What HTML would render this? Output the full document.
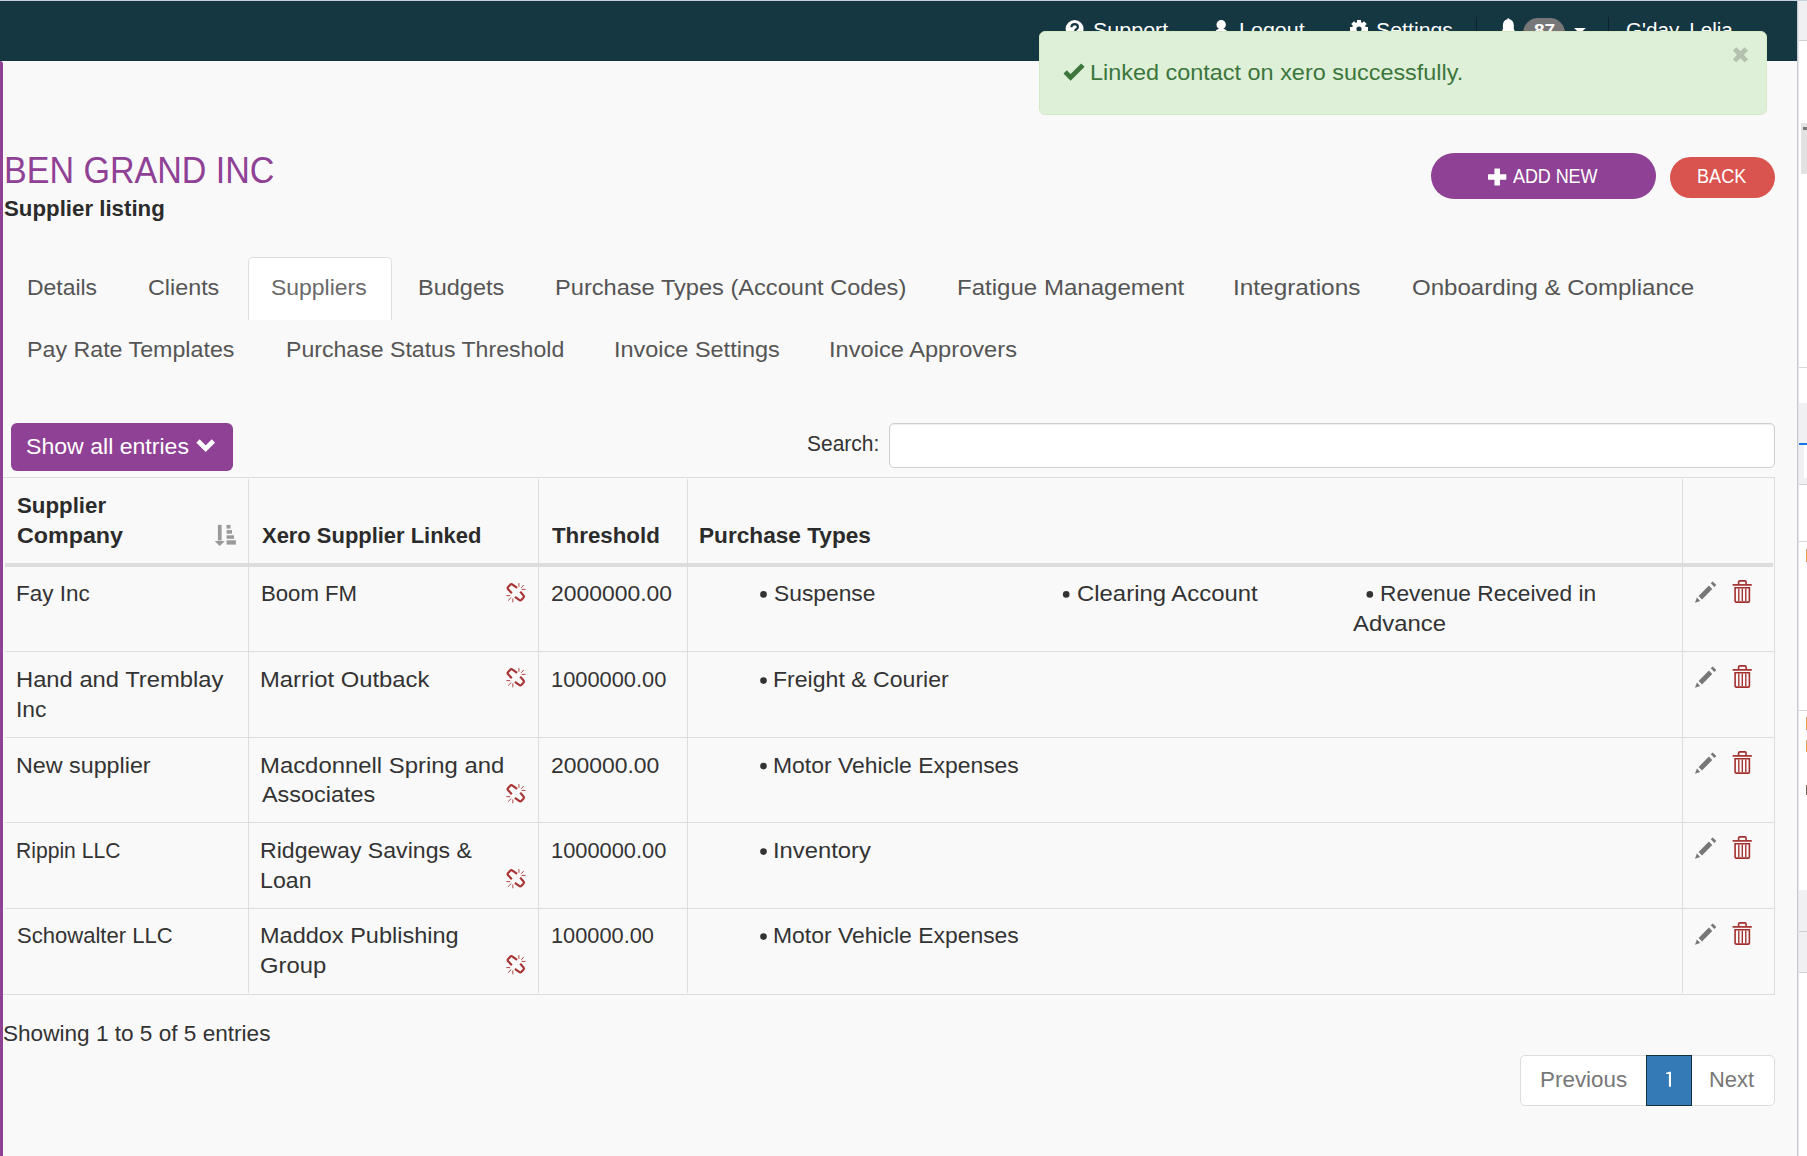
<!DOCTYPE html>
<html><head><meta charset="utf-8">
<style>
html,body{margin:0;padding:0;}
body{width:1807px;height:1156px;overflow:hidden;position:relative;background:#f9f9f9;font-family:"Liberation Sans",sans-serif;}
.tx{position:absolute;white-space:nowrap;transform-origin:0 0;}
.bx{position:absolute;box-sizing:border-box;}
svg{position:absolute;overflow:visible;}
</style></head><body>
<!-- top line + navbar -->
<div class="bx" style="left:0;top:0;width:1807px;height:1px;background:#c9d1df;"></div>
<div class="bx" style="left:0;top:1px;width:1797px;height:60px;background:#153742;"></div>
<!-- right strip -->
<div class="bx" style="left:1797px;top:1px;width:10px;height:1155px;background:#ffffff;border-left:1px solid #c6c9cf;box-shadow:inset 1px 0 0 #e6e7ea;"></div>
<div class="bx" style="left:1799px;top:1px;width:8px;height:40px;background:#f0f0f3;border-bottom:1px solid #d0d0d4;"></div>
<div class="bx" style="left:1801px;top:123px;width:6px;height:51px;background:#e2e2e2;"></div>
<div class="bx" style="left:1803px;top:127px;width:4px;height:3px;background:#777;"></div>
<div class="bx" style="left:1799px;top:367px;width:8px;height:1px;background:#d8d8d8;"></div>
<div class="bx" style="left:1799px;top:403px;width:8px;height:82px;background:#f0f0f3;border-bottom:1px solid #d0d0d4;"></div>
<div class="bx" style="left:1799px;top:443px;width:8px;height:2px;background:#1a73e8;"></div>
<div class="bx" style="left:1804px;top:445px;width:3px;height:33px;background:#ffffff;"></div>
<div class="bx" style="left:1799px;top:541px;width:8px;height:1px;background:#d8d8d8;"></div>
<div class="bx" style="left:1799px;top:710px;width:8px;height:1px;background:#d8d8d8;"></div>
<div class="bx" style="left:1806px;top:549px;width:1px;height:13px;background:#e8a050;"></div>
<div class="bx" style="left:1806px;top:717px;width:1px;height:13px;background:#e8a050;"></div>
<div class="bx" style="left:1806px;top:740px;width:1px;height:12px;background:#e8a050;"></div>
<div class="bx" style="left:1806px;top:785px;width:1px;height:10px;background:#776655;"></div>
<div class="bx" style="left:1799px;top:890px;width:8px;height:83px;background:#f0f0f3;border-bottom:1px solid #d0d0d4;"></div>
<div class="bx" style="left:1799px;top:931px;width:8px;height:1px;background:#d0d0d4;"></div>

<!-- purple left bar -->
<div class="bx" style="left:0;top:61px;width:3px;height:1095px;background:#8f4195;border-top-right-radius:3px;"></div>

<!-- navbar icons -->
<svg style="left:1065px;top:20px" width="20" height="20" viewBox="0 0 20 20">
  <circle cx="9.6" cy="9" r="9" fill="#fff"/>
  <path d="M6.4 7.2 Q6.6 4.2 9.7 4.2 Q12.9 4.3 12.9 6.9 Q12.8 8.6 11 9.5 Q10.3 9.9 10.3 11" stroke="#153742" stroke-width="2.2" fill="none"/>
</svg>
<svg style="left:1213px;top:19px" width="18" height="16" viewBox="0 0 18 16">
  <circle cx="8.2" cy="5.8" r="4.7" fill="#fff"/>
  <path d="M1.3 16 Q2 9.6 8.2 9.6 Q14.4 9.6 15.6 16 Z" fill="#fff"/>
</svg>
<svg style="left:1349px;top:19px" width="20" height="16" viewBox="0 0 20 16">
  <g fill="#fff">
  <circle cx="10" cy="10" r="7"/>
  <rect x="8" y="1" width="4" height="4"/>
  <rect x="8" y="15" width="4" height="4"/>
  <rect x="1" y="8" width="4" height="4"/>
  <rect x="15" y="8" width="4" height="4"/>
  <rect x="8" y="1" width="4" height="4" transform="rotate(45 10 10)"/>
  <rect x="8" y="15" width="4" height="4" transform="rotate(45 10 10)"/>
  <rect x="1" y="8" width="4" height="4" transform="rotate(45 10 10)"/>
  <rect x="15" y="8" width="4" height="4" transform="rotate(45 10 10)"/>
  </g>
  <circle cx="10" cy="10" r="2.6" fill="#153742"/>
</svg>
<div class="bx" style="left:1476px;top:17px;width:1px;height:44px;background:#0c252d;"></div>
<div class="bx" style="left:1608px;top:17px;width:1px;height:44px;background:#0c252d;"></div>
<svg style="left:1501px;top:18px" width="16" height="16" viewBox="0 0 16 16">
  <path d="M7.3 0.3 Q8.2 0.3 8.4 1.3 Q12.6 2.5 12.8 7 L12.8 11 L14.2 14 L0.5 14 L1.9 11 L1.9 7 Q2.1 2.5 6.3 1.3 Q6.5 0.3 7.3 0.3Z" fill="#fff"/>
</svg>
<div class="bx" style="left:1522.7px;top:17.9px;width:42.3px;height:30px;background:#777;border-radius:15px;"></div>
<svg style="left:1574px;top:28px" width="12" height="6" viewBox="0 0 12 6"><path d="M0 0 L11.8 0 L5.9 5.5Z" fill="#fff"/></svg>

<!-- alert -->
<div class="bx" style="left:1039px;top:31px;width:728px;height:84px;background:#dff0d8;border:1px solid #d6e9c6;border-radius:6px;z-index:10;"></div>
<svg style="left:1062px;top:62px;z-index:11" width="24" height="20" viewBox="0 0 24 20">
  <path d="M1.5 11.5 L4.8 8.2 L8.6 12 L19.2 1.5 L22.6 4.8 L8.6 18.8 Z" fill="#3c763d"/>
</svg>
<svg style="left:0;top:0;z-index:11" width="1807" height="100" viewBox="0 0 1807 100">
  <path d="M1736.4 47.3 L1732.9 50.5 L1737 54.7 L1732.9 59.4 L1736.2 62.3 L1740.4 58.2 L1744.5 62.3 L1748.1 59.4 L1743.8 54.7 L1748.1 50.5 L1744.5 47.3 L1740.5 51.2 Z" fill="#b3c1ae"/>
</svg>

<!-- buttons -->
<div class="bx" style="left:1431px;top:153px;width:225px;height:46px;background:#8f4195;border-radius:23px;"></div>
<svg style="left:1488px;top:167.5px" width="19" height="19" viewBox="0 0 19 19">
  <path d="M9.2 0.4 L9.2 17.4 M0 8.9 L18.3 8.9" stroke="#fff" stroke-width="5.5"/>
</svg>
<div class="bx" style="left:1670px;top:157px;width:105px;height:41px;background:#d9534f;border-radius:20.5px;"></div>

<!-- active tab -->
<div class="bx" style="left:248px;top:257px;width:144px;height:63px;background:#fff;border:1px solid #ddd;border-bottom:none;border-radius:5px 5px 0 0;"></div>

<!-- show entries btn -->
<div class="bx" style="left:11px;top:423px;width:222px;height:47.6px;background:#8f4195;border-radius:6px;"></div>
<svg style="left:195px;top:437px" width="22" height="16" viewBox="0 0 22 16">
  <path d="M3 4 L10.7 11.7 L18.4 4" stroke="#fff" stroke-width="4.6" fill="none"/>
</svg>
<!-- search input -->
<div class="bx" style="left:889px;top:423px;width:886px;height:45px;background:#fff;border:1px solid #cfcfcf;border-radius:5px;box-shadow:inset 0 1px 1px rgba(0,0,0,.075);"></div>

<!-- table -->
<div class="bx" style="left:3px;top:477px;width:1772px;height:518px;border:1px solid #dddddd;border-left:none;"></div>
<div class="bx" style="left:5px;top:563px;width:1768px;height:3.6px;background:#dddddd;"></div>
<div class="bx" style="left:5px;top:651px;width:1769px;height:1px;background:#dddddd;"></div>
<div class="bx" style="left:5px;top:737px;width:1769px;height:1px;background:#dddddd;"></div>
<div class="bx" style="left:5px;top:822px;width:1769px;height:1px;background:#dddddd;"></div>
<div class="bx" style="left:5px;top:908px;width:1769px;height:1px;background:#dddddd;"></div>
<div class="bx" style="left:248px;top:479px;width:1px;height:514px;background:#dddddd;"></div>
<div class="bx" style="left:538px;top:479px;width:1px;height:514px;background:#dddddd;"></div>
<div class="bx" style="left:687px;top:479px;width:1px;height:514px;background:#dddddd;"></div>
<div class="bx" style="left:1682px;top:479px;width:1px;height:514px;background:#dddddd;"></div>

<!-- sort icon -->
<svg style="left:210px;top:520px" width="30" height="30" viewBox="0 0 30 30">
  <g fill="#999">
  <rect x="7.9" y="4.9" width="3.7" height="15.6"/>
  <path d="M4.7 20.9 L14.9 20.9 L9.7 26.1Z"/>
  <rect x="16.6" y="4.9" width="3.9" height="3.7"/>
  <rect x="16.6" y="10.1" width="5.4" height="3.6"/>
  <rect x="16.6" y="15.3" width="7.4" height="3.5"/>
  <rect x="16.6" y="20.3" width="9.3" height="4.3"/>
  </g>
</svg>
<svg style="left:495px;top:575px" width="40" height="40" viewBox="0 0 40 40">
  <g stroke="#a83535" fill="none">
  <path d="M22.1 12.9 L17.55 9.7 Q16.2 8.6 15.23 9.71 L13.17 11.89 Q12.1 13.1 13.11 14.16 L16.8 18.2" stroke-width="2.2"/>
  <path d="M19.9 21.9 L24.15 24.81 Q25.3 25.8 26.48 24.8 L28.42 22.8 Q29.5 21.6 28.53 20.51 L25.2 16.6" stroke-width="2.2"/>
  <path d="M23.9 8.1 L23.9 11.8 M26.3 12.8 L28.7 10 M26.6 14.4 L30.5 14.4 M11.4 20.6 L15.2 20.6 M13.1 25.6 L16.3 22.5 M17.8 23.5 L17.8 27.3" stroke-width="0.9"/>
  </g>
</svg>
<svg style="left:1685px;top:570px" width="80" height="45" viewBox="1685 570 80 45">
  <path d="M1695 602.8 L1696.9 597.6 L1700.2 601 Z" fill="#777"/>
  <path d="M1698.6 596 L1708.9 585.6 L1712.3 589 L1702 599.4 Z" fill="#777"/>
  <path d="M1710.7 583.3 L1712.7 581.5 L1716.3 585 L1714.4 587 Z" fill="#777"/>
  <g stroke="#a32e2e" fill="none" stroke-width="1.6">
  <path d="M1738.6 584.2 L1738.6 582 Q1738.6 580.9 1739.8 580.9 L1745 580.9 Q1746.1 580.9 1746.1 582 L1746.1 584.2"/>
  <path d="M1732.6 584.9 L1751.8 584.9" stroke-width="1.7"/>
  <path d="M1735.1 587.8 L1735.1 601 Q1735.1 602.1 1736.3 602.1 L1748.2 602.1 Q1749.4 602.1 1749.4 601 L1749.4 587.8 Z"/>
  <path d="M1738.8 588.5 L1738.8 601 M1742.3 588.5 L1742.3 601 M1745.8 588.5 L1745.8 601" stroke-width="1.35"/>
  </g>
</svg>
<svg style="left:495px;top:660.4px" width="40" height="40" viewBox="0 0 40 40">
  <g stroke="#a83535" fill="none">
  <path d="M22.1 12.9 L17.55 9.7 Q16.2 8.6 15.23 9.71 L13.17 11.89 Q12.1 13.1 13.11 14.16 L16.8 18.2" stroke-width="2.2"/>
  <path d="M19.9 21.9 L24.15 24.81 Q25.3 25.8 26.48 24.8 L28.42 22.8 Q29.5 21.6 28.53 20.51 L25.2 16.6" stroke-width="2.2"/>
  <path d="M23.9 8.1 L23.9 11.8 M26.3 12.8 L28.7 10 M26.6 14.4 L30.5 14.4 M11.4 20.6 L15.2 20.6 M13.1 25.6 L16.3 22.5 M17.8 23.5 L17.8 27.3" stroke-width="0.9"/>
  </g>
</svg>
<svg style="left:1685px;top:655.4px" width="80" height="45" viewBox="1685 570 80 45">
  <path d="M1695 602.8 L1696.9 597.6 L1700.2 601 Z" fill="#777"/>
  <path d="M1698.6 596 L1708.9 585.6 L1712.3 589 L1702 599.4 Z" fill="#777"/>
  <path d="M1710.7 583.3 L1712.7 581.5 L1716.3 585 L1714.4 587 Z" fill="#777"/>
  <g stroke="#a32e2e" fill="none" stroke-width="1.6">
  <path d="M1738.6 584.2 L1738.6 582 Q1738.6 580.9 1739.8 580.9 L1745 580.9 Q1746.1 580.9 1746.1 582 L1746.1 584.2"/>
  <path d="M1732.6 584.9 L1751.8 584.9" stroke-width="1.7"/>
  <path d="M1735.1 587.8 L1735.1 601 Q1735.1 602.1 1736.3 602.1 L1748.2 602.1 Q1749.4 602.1 1749.4 601 L1749.4 587.8 Z"/>
  <path d="M1738.8 588.5 L1738.8 601 M1742.3 588.5 L1742.3 601 M1745.8 588.5 L1745.8 601" stroke-width="1.35"/>
  </g>
</svg>
<svg style="left:495px;top:775.5px" width="40" height="40" viewBox="0 0 40 40">
  <g stroke="#a83535" fill="none">
  <path d="M22.1 12.9 L17.55 9.7 Q16.2 8.6 15.23 9.71 L13.17 11.89 Q12.1 13.1 13.11 14.16 L16.8 18.2" stroke-width="2.2"/>
  <path d="M19.9 21.9 L24.15 24.81 Q25.3 25.8 26.48 24.8 L28.42 22.8 Q29.5 21.6 28.53 20.51 L25.2 16.6" stroke-width="2.2"/>
  <path d="M23.9 8.1 L23.9 11.8 M26.3 12.8 L28.7 10 M26.6 14.4 L30.5 14.4 M11.4 20.6 L15.2 20.6 M13.1 25.6 L16.3 22.5 M17.8 23.5 L17.8 27.3" stroke-width="0.9"/>
  </g>
</svg>
<svg style="left:1685px;top:741px" width="80" height="45" viewBox="1685 570 80 45">
  <path d="M1695 602.8 L1696.9 597.6 L1700.2 601 Z" fill="#777"/>
  <path d="M1698.6 596 L1708.9 585.6 L1712.3 589 L1702 599.4 Z" fill="#777"/>
  <path d="M1710.7 583.3 L1712.7 581.5 L1716.3 585 L1714.4 587 Z" fill="#777"/>
  <g stroke="#a32e2e" fill="none" stroke-width="1.6">
  <path d="M1738.6 584.2 L1738.6 582 Q1738.6 580.9 1739.8 580.9 L1745 580.9 Q1746.1 580.9 1746.1 582 L1746.1 584.2"/>
  <path d="M1732.6 584.9 L1751.8 584.9" stroke-width="1.7"/>
  <path d="M1735.1 587.8 L1735.1 601 Q1735.1 602.1 1736.3 602.1 L1748.2 602.1 Q1749.4 602.1 1749.4 601 L1749.4 587.8 Z"/>
  <path d="M1738.8 588.5 L1738.8 601 M1742.3 588.5 L1742.3 601 M1745.8 588.5 L1745.8 601" stroke-width="1.35"/>
  </g>
</svg>
<svg style="left:495px;top:860.8px" width="40" height="40" viewBox="0 0 40 40">
  <g stroke="#a83535" fill="none">
  <path d="M22.1 12.9 L17.55 9.7 Q16.2 8.6 15.23 9.71 L13.17 11.89 Q12.1 13.1 13.11 14.16 L16.8 18.2" stroke-width="2.2"/>
  <path d="M19.9 21.9 L24.15 24.81 Q25.3 25.8 26.48 24.8 L28.42 22.8 Q29.5 21.6 28.53 20.51 L25.2 16.6" stroke-width="2.2"/>
  <path d="M23.9 8.1 L23.9 11.8 M26.3 12.8 L28.7 10 M26.6 14.4 L30.5 14.4 M11.4 20.6 L15.2 20.6 M13.1 25.6 L16.3 22.5 M17.8 23.5 L17.8 27.3" stroke-width="0.9"/>
  </g>
</svg>
<svg style="left:1685px;top:826.3px" width="80" height="45" viewBox="1685 570 80 45">
  <path d="M1695 602.8 L1696.9 597.6 L1700.2 601 Z" fill="#777"/>
  <path d="M1698.6 596 L1708.9 585.6 L1712.3 589 L1702 599.4 Z" fill="#777"/>
  <path d="M1710.7 583.3 L1712.7 581.5 L1716.3 585 L1714.4 587 Z" fill="#777"/>
  <g stroke="#a32e2e" fill="none" stroke-width="1.6">
  <path d="M1738.6 584.2 L1738.6 582 Q1738.6 580.9 1739.8 580.9 L1745 580.9 Q1746.1 580.9 1746.1 582 L1746.1 584.2"/>
  <path d="M1732.6 584.9 L1751.8 584.9" stroke-width="1.7"/>
  <path d="M1735.1 587.8 L1735.1 601 Q1735.1 602.1 1736.3 602.1 L1748.2 602.1 Q1749.4 602.1 1749.4 601 L1749.4 587.8 Z"/>
  <path d="M1738.8 588.5 L1738.8 601 M1742.3 588.5 L1742.3 601 M1745.8 588.5 L1745.8 601" stroke-width="1.35"/>
  </g>
</svg>
<svg style="left:495px;top:946.5px" width="40" height="40" viewBox="0 0 40 40">
  <g stroke="#a83535" fill="none">
  <path d="M22.1 12.9 L17.55 9.7 Q16.2 8.6 15.23 9.71 L13.17 11.89 Q12.1 13.1 13.11 14.16 L16.8 18.2" stroke-width="2.2"/>
  <path d="M19.9 21.9 L24.15 24.81 Q25.3 25.8 26.48 24.8 L28.42 22.8 Q29.5 21.6 28.53 20.51 L25.2 16.6" stroke-width="2.2"/>
  <path d="M23.9 8.1 L23.9 11.8 M26.3 12.8 L28.7 10 M26.6 14.4 L30.5 14.4 M11.4 20.6 L15.2 20.6 M13.1 25.6 L16.3 22.5 M17.8 23.5 L17.8 27.3" stroke-width="0.9"/>
  </g>
</svg>
<svg style="left:1685px;top:912px" width="80" height="45" viewBox="1685 570 80 45">
  <path d="M1695 602.8 L1696.9 597.6 L1700.2 601 Z" fill="#777"/>
  <path d="M1698.6 596 L1708.9 585.6 L1712.3 589 L1702 599.4 Z" fill="#777"/>
  <path d="M1710.7 583.3 L1712.7 581.5 L1716.3 585 L1714.4 587 Z" fill="#777"/>
  <g stroke="#a32e2e" fill="none" stroke-width="1.6">
  <path d="M1738.6 584.2 L1738.6 582 Q1738.6 580.9 1739.8 580.9 L1745 580.9 Q1746.1 580.9 1746.1 582 L1746.1 584.2"/>
  <path d="M1732.6 584.9 L1751.8 584.9" stroke-width="1.7"/>
  <path d="M1735.1 587.8 L1735.1 601 Q1735.1 602.1 1736.3 602.1 L1748.2 602.1 Q1749.4 602.1 1749.4 601 L1749.4 587.8 Z"/>
  <path d="M1738.8 588.5 L1738.8 601 M1742.3 588.5 L1742.3 601 M1745.8 588.5 L1745.8 601" stroke-width="1.35"/>
  </g>
</svg>
<!-- bullets -->
<svg style="left:0;top:0" width="1807" height="1156" viewBox="0 0 1807 1156">
  <g fill="#333">
  <circle cx="763.5" cy="594.4" r="3.3"/>
  <circle cx="1066.2" cy="594.4" r="3.3"/>
  <circle cx="1369.8" cy="594.4" r="3.3"/>
  <circle cx="763.5" cy="680.6" r="3.3"/>
  <circle cx="763.5" cy="766.1" r="3.3"/>
  <circle cx="763.5" cy="851.6" r="3.3"/>
  <circle cx="763.5" cy="936.6" r="3.3"/>
  </g>
</svg>
<!-- pagination -->
<div class="bx" style="left:1520px;top:1055px;width:255px;height:51px;background:#fff;border:1px solid #dddddd;border-radius:5px;"></div>
<div class="bx" style="left:1646px;top:1055px;width:46px;height:51px;background:#337ab7;border:1px solid #10303a;"></div>
<svg style="left:0;top:0" width="1807" height="1156" viewBox="0 0 1807 1156">
  <path d="M1668.8 1071.7 L1671 1071.7 L1671 1086.8 L1668.9 1086.8 L1668.9 1074 L1666.2 1074 L1666.2 1072.6 Q1667.9 1072.5 1668.8 1071.7 Z" fill="#fff"/>
</svg>

<div class="tx" style="left:1093.20px;top:20px;font-size:20px;line-height:20px;font-weight:400;color:#ffffff;letter-spacing:0.000px;transform:scaleX(1.0739);">Support</div>
<div class="tx" style="left:1238.73px;top:20px;font-size:20px;line-height:20px;font-weight:400;color:#ffffff;letter-spacing:0.000px;transform:scaleX(1.0740);">Logout</div>
<div class="tx" style="left:1375.90px;top:20px;font-size:20px;line-height:20px;font-weight:400;color:#ffffff;letter-spacing:0.000px;transform:scaleX(1.0655);">Settings</div>
<div class="tx" style="left:1625.57px;top:20px;font-size:20px;line-height:20px;font-weight:400;color:#ffffff;letter-spacing:0.000px;transform:scaleX(1.0321);">G'day, Lelia</div>
<div class="tx" style="left:1534.30px;top:22px;font-size:17px;line-height:17px;font-weight:700;color:#ffffff;letter-spacing:0.031px;transform:scaleX(1.1200);">87</div>
<div class="tx" style="left:1089.94px;top:62px;font-size:22px;line-height:22px;font-weight:400;color:#3c763d;letter-spacing:0.000px;transform:scaleX(1.0648);z-index:11;">Linked contact on xero successfully.</div>
<div class="tx" style="left:3.51px;top:153px;font-size:36px;line-height:36px;font-weight:400;color:#8f4195;letter-spacing:0.000px;transform:scaleX(0.9451);">BEN GRAND INC</div>
<div class="tx" style="left:4.20px;top:198px;font-size:22px;line-height:22px;font-weight:700;color:#2b2b2b;letter-spacing:0.000px;transform:scaleX(1.0117);">Supplier listing</div>
<div class="tx" style="left:1513.20px;top:166px;font-size:20px;line-height:20px;font-weight:400;color:#ffffff;letter-spacing:-0.085px;transform:scaleX(0.9000);">ADD NEW</div>
<div class="tx" style="left:1697.09px;top:166px;font-size:20px;line-height:20px;font-weight:400;color:#ffffff;letter-spacing:0.000px;transform:scaleX(0.9053);">BACK</div>
<div class="tx" style="left:26.96px;top:277px;font-size:22px;line-height:22px;font-weight:400;color:#555555;letter-spacing:0.000px;transform:scaleX(1.0416);">Details</div>
<div class="tx" style="left:148.44px;top:277px;font-size:22px;line-height:22px;font-weight:400;color:#555555;letter-spacing:0.000px;transform:scaleX(1.0597);">Clients</div>
<div class="tx" style="left:271.36px;top:277px;font-size:22px;line-height:22px;font-weight:400;color:#6a6a6a;letter-spacing:0.000px;transform:scaleX(1.0428);">Suppliers</div>
<div class="tx" style="left:418.43px;top:277px;font-size:22px;line-height:22px;font-weight:400;color:#555555;letter-spacing:0.000px;transform:scaleX(1.0686);">Budgets</div>
<div class="tx" style="left:555.43px;top:277px;font-size:22px;line-height:22px;font-weight:400;color:#555555;letter-spacing:0.000px;transform:scaleX(1.0732);">Purchase Types (Account Codes)</div>
<div class="tx" style="left:956.91px;top:277px;font-size:22px;line-height:22px;font-weight:400;color:#555555;letter-spacing:0.000px;transform:scaleX(1.0929);">Fatigue Management</div>
<div class="tx" style="left:1233.38px;top:277px;font-size:22px;line-height:22px;font-weight:400;color:#555555;letter-spacing:-0.000px;transform:scaleX(1.1083);">Integrations</div>
<div class="tx" style="left:1412.41px;top:277px;font-size:22px;line-height:22px;font-weight:400;color:#555555;letter-spacing:0.000px;transform:scaleX(1.0938);">Onboarding &amp; Compliance</div>
<div class="tx" style="left:26.94px;top:339px;font-size:22px;line-height:22px;font-weight:400;color:#555555;letter-spacing:0.000px;transform:scaleX(1.0558);">Pay Rate Templates</div>
<div class="tx" style="left:285.95px;top:339px;font-size:22px;line-height:22px;font-weight:400;color:#555555;letter-spacing:0.000px;transform:scaleX(1.0501);">Purchase Status Threshold</div>
<div class="tx" style="left:613.87px;top:339px;font-size:22px;line-height:22px;font-weight:400;color:#555555;letter-spacing:0.000px;transform:scaleX(1.0671);">Invoice Settings</div>
<div class="tx" style="left:829.25px;top:339px;font-size:22px;line-height:22px;font-weight:400;color:#555555;letter-spacing:0.000px;transform:scaleX(1.0748);">Invoice Approvers</div>
<div class="tx" style="left:26.35px;top:436px;font-size:22px;line-height:22px;font-weight:400;color:#ffffff;letter-spacing:0.000px;transform:scaleX(1.0493);">Show all entries</div>
<div class="tx" style="left:807.45px;top:433px;font-size:22px;line-height:22px;font-weight:400;color:#333333;letter-spacing:0.000px;transform:scaleX(0.9524);">Search:</div>
<div class="tx" style="left:17.00px;top:495px;font-size:21.2px;line-height:21.2px;font-weight:700;color:#2b2b2b;letter-spacing:0.000px;transform:scaleX(1.0507);">Supplier</div>
<div class="tx" style="left:17.00px;top:525px;font-size:21.2px;line-height:21.2px;font-weight:700;color:#2b2b2b;letter-spacing:0.000px;transform:scaleX(1.0977);">Company</div>
<div class="tx" style="left:261.60px;top:525px;font-size:21.2px;line-height:21.2px;font-weight:700;color:#2b2b2b;letter-spacing:-0.000px;transform:scaleX(1.0352);">Xero Supplier Linked</div>
<div class="tx" style="left:552.00px;top:525px;font-size:21.2px;line-height:21.2px;font-weight:700;color:#2b2b2b;letter-spacing:0.000px;transform:scaleX(1.0526);">Threshold</div>
<div class="tx" style="left:698.93px;top:525px;font-size:21.2px;line-height:21.2px;font-weight:700;color:#2b2b2b;letter-spacing:0.000px;transform:scaleX(1.0681);">Purchase Types</div>
<div class="tx" style="left:15.95px;top:584px;font-size:21.4px;line-height:21.4px;font-weight:400;color:#333333;letter-spacing:0.000px;transform:scaleX(1.0498);">Fay Inc</div>
<div class="tx" style="left:15.89px;top:670px;font-size:21.4px;line-height:21.4px;font-weight:400;color:#333333;letter-spacing:0.000px;transform:scaleX(1.1107);">Hand and Tremblay</div>
<div class="tx" style="left:15.91px;top:756px;font-size:21.4px;line-height:21.4px;font-weight:400;color:#333333;letter-spacing:0.000px;transform:scaleX(1.0888);">New supplier</div>
<div class="tx" style="left:16.01px;top:841px;font-size:21.4px;line-height:21.4px;font-weight:400;color:#333333;letter-spacing:0.000px;transform:scaleX(0.9868);">Rippin LLC</div>
<div class="tx" style="left:17.00px;top:926px;font-size:21.4px;line-height:21.4px;font-weight:400;color:#333333;letter-spacing:0.000px;transform:scaleX(1.0309);">Schowalter LLC</div>
<div class="tx" style="left:15.93px;top:700px;font-size:21.4px;line-height:21.4px;font-weight:400;color:#333333;letter-spacing:0.000px;transform:scaleX(1.0668);">Inc</div>
<div class="tx" style="left:260.56px;top:584px;font-size:21.4px;line-height:21.4px;font-weight:400;color:#333333;letter-spacing:0.000px;transform:scaleX(1.0364);">Boom FM</div>
<div class="tx" style="left:260.39px;top:670px;font-size:21.4px;line-height:21.4px;font-weight:400;color:#333333;letter-spacing:0.000px;transform:scaleX(1.1125);">Marriot Outback</div>
<div class="tx" style="left:260.38px;top:756px;font-size:21.4px;line-height:21.4px;font-weight:400;color:#333333;letter-spacing:0.000px;transform:scaleX(1.1166);">Macdonnell Spring and</div>
<div class="tx" style="left:261.50px;top:785px;font-size:21.4px;line-height:21.4px;font-weight:400;color:#333333;letter-spacing:-0.000px;transform:scaleX(1.0950);">Associates</div>
<div class="tx" style="left:260.42px;top:841px;font-size:21.4px;line-height:21.4px;font-weight:400;color:#333333;letter-spacing:0.000px;transform:scaleX(1.0800);">Ridgeway Savings &amp;</div>
<div class="tx" style="left:260.42px;top:871px;font-size:21.4px;line-height:21.4px;font-weight:400;color:#333333;letter-spacing:-0.000px;transform:scaleX(1.0834);">Loan</div>
<div class="tx" style="left:260.40px;top:926px;font-size:21.4px;line-height:21.4px;font-weight:400;color:#333333;letter-spacing:0.000px;transform:scaleX(1.0987);">Maddox Publishing</div>
<div class="tx" style="left:260.39px;top:956px;font-size:21.4px;line-height:21.4px;font-weight:400;color:#333333;letter-spacing:0.000px;transform:scaleX(1.1120);">Group</div>
<div class="tx" style="left:550.93px;top:584px;font-size:21.4px;line-height:21.4px;font-weight:400;color:#333333;letter-spacing:-0.000px;transform:scaleX(1.0703);">2000000.00</div>
<div class="tx" style="left:550.98px;top:670px;font-size:21.4px;line-height:21.4px;font-weight:400;color:#333333;letter-spacing:-0.000px;transform:scaleX(1.0204);">1000000.00</div>
<div class="tx" style="left:550.93px;top:756px;font-size:21.4px;line-height:21.4px;font-weight:400;color:#333333;letter-spacing:0.000px;transform:scaleX(1.0717);">200000.00</div>
<div class="tx" style="left:550.98px;top:841px;font-size:21.4px;line-height:21.4px;font-weight:400;color:#333333;letter-spacing:-0.000px;transform:scaleX(1.0204);">1000000.00</div>
<div class="tx" style="left:550.98px;top:926px;font-size:21.4px;line-height:21.4px;font-weight:400;color:#333333;letter-spacing:0.000px;transform:scaleX(1.0178);">100000.00</div>
<div class="tx" style="left:774.00px;top:584px;font-size:21.4px;line-height:21.4px;font-weight:400;color:#333333;letter-spacing:0.000px;transform:scaleX(1.0664);">Suspense</div>
<div class="tx" style="left:1076.88px;top:584px;font-size:21.4px;line-height:21.4px;font-weight:400;color:#333333;letter-spacing:0.000px;transform:scaleX(1.1176);">Clearing Account</div>
<div class="tx" style="left:1380.34px;top:584px;font-size:21.4px;line-height:21.4px;font-weight:400;color:#333333;letter-spacing:0.000px;transform:scaleX(1.0628);">Revenue Received in</div>
<div class="tx" style="left:1352.50px;top:614px;font-size:21.4px;line-height:21.4px;font-weight:400;color:#333333;letter-spacing:0.000px;transform:scaleX(1.1172);">Advance</div>
<div class="tx" style="left:772.92px;top:670px;font-size:21.4px;line-height:21.4px;font-weight:400;color:#333333;letter-spacing:0.000px;transform:scaleX(1.0789);">Freight &amp; Courier</div>
<div class="tx" style="left:772.93px;top:756px;font-size:21.4px;line-height:21.4px;font-weight:400;color:#333333;letter-spacing:0.000px;transform:scaleX(1.0712);">Motor Vehicle Expenses</div>
<div class="tx" style="left:772.89px;top:841px;font-size:21.4px;line-height:21.4px;font-weight:400;color:#333333;letter-spacing:0.000px;transform:scaleX(1.1112);">Inventory</div>
<div class="tx" style="left:772.93px;top:926px;font-size:21.4px;line-height:21.4px;font-weight:400;color:#333333;letter-spacing:0.000px;transform:scaleX(1.0712);">Motor Vehicle Expenses</div>
<div class="tx" style="left:2.97px;top:1023px;font-size:22px;line-height:22px;font-weight:400;color:#333333;letter-spacing:0.000px;transform:scaleX(1.0266);">Showing 1 to 5 of 5 entries</div>
<div class="tx" style="left:1539.78px;top:1069px;font-size:22px;line-height:22px;font-weight:400;color:#777777;letter-spacing:-0.000px;transform:scaleX(1.0190);">Previous</div>
<div class="tx" style="left:1709.41px;top:1069px;font-size:22px;line-height:22px;font-weight:400;color:#777777;letter-spacing:0.000px;transform:scaleX(0.9949);">Next</div>
</body></html>
